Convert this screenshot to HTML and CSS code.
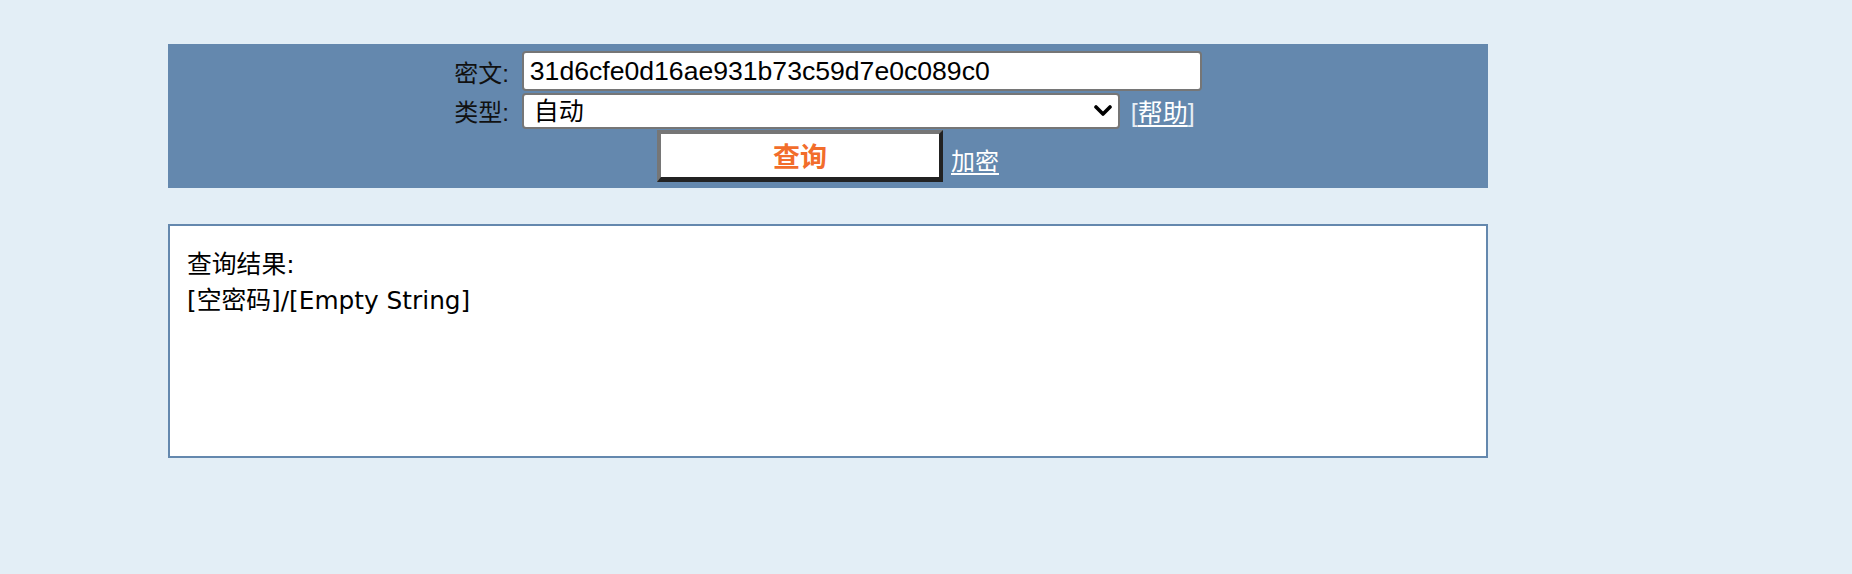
FILE: index.html
```html
<!DOCTYPE html>
<html lang="zh-CN">
<head>
<meta charset="utf-8">
<title>查询</title>
<link rel="stylesheet" href="styles.css">
</head>
<body>
<div class="page">
  <form class="panel">
    <div class="form-grid">
      <label class="field-label" for="cipher">密文:</label>
      <input class="cipher-input" id="cipher" type="text" value="31d6cfe0d16ae931b73c59d7e0c089c0">
      <label class="field-label" for="type">类型:</label>
      <div class="type-cell">
        <div class="select-wrap">
          <select class="type-select" id="type">
            <option>自动</option>
          </select>
          <svg class="chevron" width="18" height="12" viewBox="0 0 18 12" aria-hidden="true">
            <path d="M2 2 L9 9 L16 2" fill="none" stroke="#000" stroke-width="3.6" stroke-linecap="round" stroke-linejoin="round"/>
          </svg>
        </div>
        <span class="help">[<a href="#" class="link">帮助</a>]</span>
      </div>
      <div class="actions">
        <button type="button" class="query-btn">查询</button>
        <a href="#" class="link encrypt-link">加密</a>
      </div>
    </div>
  </form>
  <div class="result">
    <div class="result-title">查询结果:</div>
    <div class="result-value">[空密码]/[Empty String]</div>
  </div>
</div>
</body>
</html>
```

FILE: styles.css
```css
html, body {
  margin: 0;
  padding: 0;
  background: #e3eef6;
}

.page {
  padding: 44px 0 0 168px;
  width: 1320px;
}

.panel {
  margin: 0;
  background: #6488ae;
  height: 144px;
  box-sizing: border-box;
  padding: 7px 0 6px;
}

.form-grid {
  display: grid;
  grid-template-columns: auto auto;
  column-gap: 13px;
  justify-content: center;
  align-items: center;
}

.field-label {
  justify-self: end;
  font-family: "Liberation Sans", "Noto Sans CJK SC", sans-serif;
  font-size: 24px;
  color: #111;
}

.cipher-input {
  width: 680px;
  height: 40px;
  box-sizing: border-box;
  margin: 0;
  padding: 0 6px;
  border: 2px solid #767676;
  border-radius: 4px;
  background: #fff;
  font-family: "Liberation Sans", "Noto Sans CJK SC", sans-serif;
  font-size: 26.6px;
  color: #000;
  outline: none;
}

.type-cell {
  display: flex;
  align-items: center;
  gap: 11px;
  margin-top: 2px;
}

.select-wrap {
  position: relative;
  width: 598px;
  height: 36px;
}

.type-select {
  appearance: none;
  -webkit-appearance: none;
  width: 100%;
  height: 100%;
  box-sizing: border-box;
  margin: 0;
  padding: 0 40px 0 10px;
  border: 2px solid #767676;
  border-radius: 4px;
  background: #fff;
  font-family: "Liberation Sans", "Noto Sans CJK SC", sans-serif;
  font-size: 25px;
  color: #000;
  outline: none;
}

.chevron {
  position: absolute;
  right: 8px;
  top: 12px;
  pointer-events: none;
}

.help {
  font-family: "Liberation Sans", "Noto Sans CJK SC", sans-serif;
  font-size: 25px;
  color: #e6edf4;
}

.link {
  color: #fff;
  text-decoration: underline;
  text-underline-offset: 3px;
  text-decoration-thickness: 2px;
}

.actions {
  grid-column: 1 / -1;
  display: flex;
  justify-content: center;
  align-items: center;
  gap: 8px;
  margin-top: 1px;
}

.query-btn {
  width: 286px;
  height: 52px;
  box-sizing: border-box;
  margin: 0;
  padding: 0;
  background: #fff;
  border-style: solid;
  border-width: 4px 4px 5px 4px;
  border-color: #767676 #222 #222 #767676;
  font-family: "Noto Sans CJK SC", sans-serif;
  font-weight: bold;
  font-size: 27px;
  color: #f26d2b;
  line-height: 1;
}

.encrypt-link {
  font-family: "Liberation Sans", "Noto Sans CJK SC", sans-serif;
  font-size: 24px;
  margin-top: 6px;
}

.result {
  margin-top: 36px;
  height: 234px;
  box-sizing: border-box;
  border: 2px solid #6488ae;
  background: #fff;
  padding: 21px 17px 14px;
  font-family: "DejaVu Sans", "Noto Sans CJK SC", sans-serif;
  font-size: 24.8px;
  line-height: 36px;
  color: #000;
}
```
